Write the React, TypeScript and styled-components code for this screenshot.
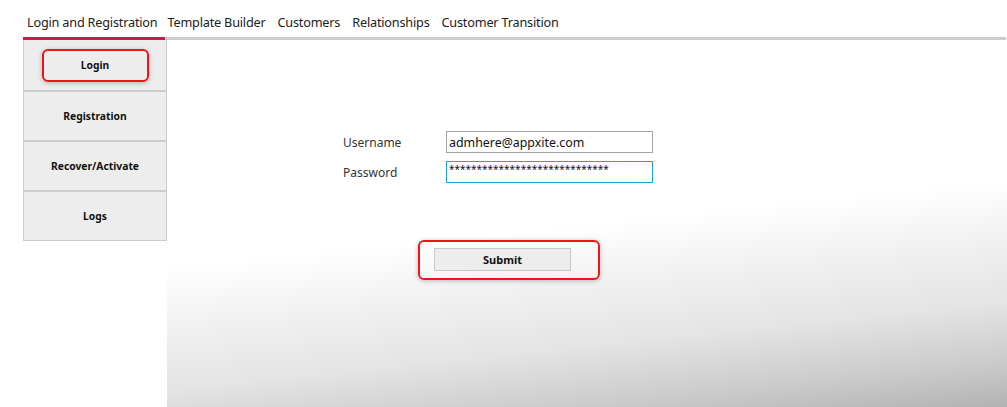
import React from "react"
import styled, { createGlobalStyle } from "styled-components"

const GlobalStyle = createGlobalStyle`
  html, body {
    margin: 0;
    padding: 0;
    background: #fff;
    font-family: "Noto Sans", "Open Sans", sans-serif;
  }
`

const Page = styled.div`
  width: 1007px;
  height: 407px;
  display: flex;
  flex-direction: column;
  overflow: hidden;
`

const TabStrip = styled.nav`
  display: flex;
  align-items: stretch;
  height: 37px;
  margin: 0 1px 0 23px;
  border-bottom: 3px solid #cccccc;
`

const Tab = styled.div<{ active?: boolean }>`
  display: flex;
  align-items: center;
  padding: 6px 6px 0;
  margin-bottom: -3px;
  border-bottom: 3px solid ${props => (props.active ? "#d7164b" : "transparent")};
  font-size: 12.7px;
  letter-spacing: -0.2px;
  color: #222;
  white-space: nowrap;

  &:first-child {
    padding: 6px 8px 0 4px;
  }
  &:nth-child(2) {
    padding-left: 2px;
  }
`

const Body = styled.div`
  flex: 1;
  display: flex;
`

const SideMenu = styled.aside`
  width: 142px;
  margin-left: 23px;
  align-self: flex-start;
  display: flex;
  flex-direction: column;
  gap: 2px;
  background: #cccccc;
  border: 1px solid #cccccc;
  border-top: none;
`

const MenuItem = styled.div`
  height: 48px;
  display: flex;
  align-items: center;
  justify-content: center;
  background: #ededed;
  font-size: 10.3px;
  font-weight: 700;
  color: #111;
  &:first-child {
    height: 50px;
  }
`

const Highlight = styled.div<{ padding: string }>`
  display: flex;
  align-items: center;
  justify-content: center;
  padding: ${props => props.padding};
  border: 2px solid #f01515;
  border-radius: 6px;
  box-shadow: 0 1px 5px rgba(0, 0, 0, 0.25);
`

const LoginHighlight = styled(Highlight)`
  box-sizing: border-box;
  width: 107px;
  height: 33px;
`

const Content = styled.main`
  flex: 1;
  display: flex;
  flex-direction: column;
  padding: 91px 0 0 176px;
  background: linear-gradient(
    174deg,
    #ffffff 50%,
    #f2f2f2 62%,
    #e4e4e4 77%,
    #cbcbcb 90%,
    #b1b3b2 100%
  );
`

const Form = styled.form`
  display: grid;
  grid-template-columns: 103px 207px;
  row-gap: 8px;
  align-items: center;
`

const Label = styled.label`
  font-size: 12px;
  color: #333;
`

const Field = styled.div<{ focused?: boolean }>`
  height: 22px;
  box-sizing: border-box;
  border: 1px solid ${props => (props.focused ? "#1ea4d6" : "#a3a3a3")};
  background: #fff;
  display: flex;
  align-items: ${props => (props.focused ? "flex-start" : "center")};
  padding: 0 2px;
  font-size: ${props => (props.focused ? "10px" : "12.4px")};
  color: #111;
  overflow: hidden;
  white-space: nowrap;
`

const SubmitRow = styled.div`
  margin: 57px 0 0 75px;
  display: flex;
`

const SubmitButton = styled.button`
  width: 137px;
  height: 23px;
  box-sizing: border-box;
  border: 1px solid #c9c9c9;
  background: #ededed;
  font-family: inherit;
  font-size: 11px;
  font-weight: 700;
  color: #111;
  padding: 0;
`

const tabs = [
  "Login and Registration",
  "Template Builder",
  "Customers",
  "Relationships",
  "Customer Transition",
]

const menu = ["Registration", "Recover/Activate", "Logs"]

export default function App() {
  return (
    <Page>
      <GlobalStyle />
      <TabStrip>
        {tabs.map((t, i) => (
          <Tab key={t} active={i === 0}>
            {t}
          </Tab>
        ))}
      </TabStrip>
      <Body>
        <SideMenu>
          <MenuItem>
            <LoginHighlight padding="0">Login</LoginHighlight>
          </MenuItem>
          {menu.map(m => (
            <MenuItem key={m}>{m}</MenuItem>
          ))}
        </SideMenu>
        <Content>
          <Form>
            <Label>Username</Label>
            <Field>admhere@appxite.com</Field>
            <Label>Password</Label>
            <Field focused>{"*".repeat(29)}</Field>
          </Form>
          <SubmitRow>
            <Highlight padding="6px 27px 7px 14px">
              <SubmitButton type="button">Submit</SubmitButton>
            </Highlight>
          </SubmitRow>
        </Content>
      </Body>
    </Page>
  )
}
